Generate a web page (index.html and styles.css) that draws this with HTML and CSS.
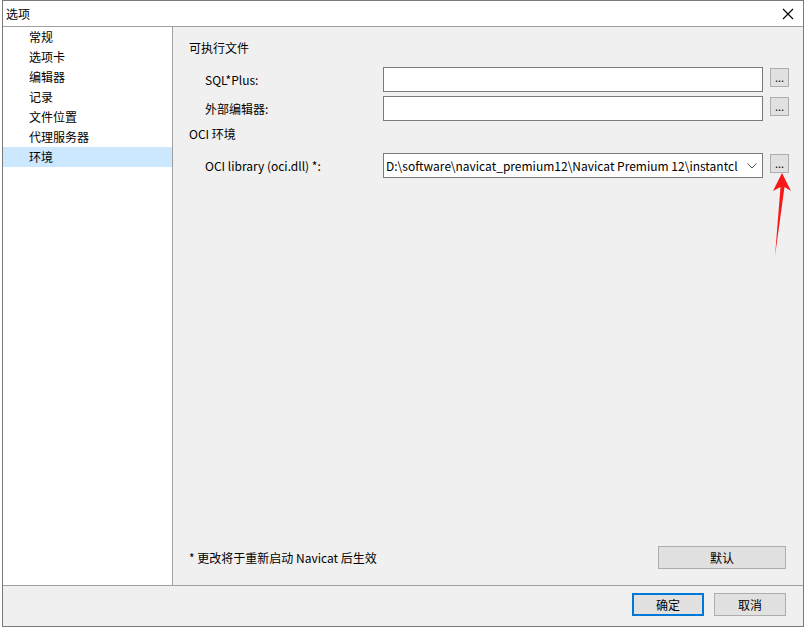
FILE: index.html
```html
<!DOCTYPE html>
<html lang="zh-CN">
<head>
  <meta charset="UTF-8">
  <title>选项</title>
  <link rel="stylesheet" href="styles.css">
</head>
<body>
  <div class="window">
    <div class="titlebar">
      <span class="title">选项</span>
      <svg class="close" width="12" height="12" viewBox="0 0 12 12">
        <path d="M1 1 L11 11 M11 1 L1 11" stroke="#000" stroke-width="1.1" fill="none"/>
      </svg>
    </div>

    <div class="main">
      <ul class="sidebar">
        <li>常规</li>
        <li>选项卡</li>
        <li>编辑器</li>
        <li>记录</li>
        <li>文件位置</li>
        <li>代理服务器</li>
        <li class="active">环境</li>
      </ul>

      <div class="content">
        <div class="group-title first">可执行文件</div>
        <div class="field">
          <label>SQL*Plus:</label>
          <div class="input"></div>
          <button type="button" class="dots">...</button>
        </div>
        <div class="field second">
          <label>外部编辑器:</label>
          <div class="input"></div>
          <button type="button" class="dots">...</button>
        </div>

        <div class="group-title">OCI 环境</div>
        <div class="field oci">
          <label>OCI library (oci.dll) *:</label>
          <div class="input combo">
            <span class="combo-text">D:\software\navicat_premium12\Navicat Premium 12\instantclient_10_2\oci.dll</span>
            <svg class="chevron" width="10" height="6" viewBox="0 0 10 6">
              <path d="M0.5 0.5 L5 5 L9.5 0.5" stroke="#555" stroke-width="1" fill="none"/>
            </svg>
          </div>
          <button type="button" class="dots">...</button>
        </div>

        <div class="bottom">
          <span class="note">* 更改将于重新启动 Navicat 后生效</span>
          <button type="button" class="btn wide">默认</button>
        </div>
      </div>
    </div>

    <div class="footer">
      <button type="button" class="btn ok">确定</button>
      <button type="button" class="btn">取消</button>
    </div>

    <!-- 标注箭头 -->
    <svg class="arrow" width="30" height="90" viewBox="0 0 30 90">
      <polygon points="11,1 20,19 13.5,15 4,84 9.5,15 2,19" fill="#f5191a"/>
    </svg>
  </div>
</body>
</html>
```

FILE: styles.css
```css
*{
  margin: 0; padding: 0;
  box-sizing: border-box;
}

body{
  background: #fff;
  font-family: "Noto Sans CJK SC", "Microsoft YaHei", sans-serif;
  font-size: 12px;
  color: #000;
}

/* 窗口 */
.window{
  position: relative;
  margin-left: 2px;
  width: 802px; height: 627px;
  border: 1px solid #7a7a7a;
  display: flex; flex-direction: column;
}

.titlebar{
  height: 26px;
  background: #fff;
  border-bottom: 1px solid #a0a0a0;
  display: flex; align-items: center;
  justify-content: space-between;
  padding: 0 9px 0 3px;
}
.title{ line-height: 16px; }

/* 中间 */
.main{
  flex: 1;
  display: flex;
  border-bottom: 1px solid #a0a0a0;
}

.sidebar{
  list-style: none;
  width: 170px; flex-shrink: 0;
  background: #fff;
  border-right: 1px solid #a0a0a0;
}
.sidebar li{
  height: 20px; line-height: 20px;
  padding-left: 26px;
}
.sidebar li.active{
  background: #cce8ff;
}

.content{
  flex: 1;
  background: #f0f0f0;
  display: flex; flex-direction: column;
  padding: 0 0 16px 16px;
}

.group-title{
  height: 16px; line-height: 16px;
  margin-top: 5px;
}
.group-title.first{ margin-top: 13px; }

.field{
  display: flex; align-items: flex-start;
  margin-top: 11px;
}
.field.second{ margin-top: 4px; }
.field label{
  width: 194px; flex-shrink: 0;
  padding-left: 16px;
  line-height: 25px;
}

.input{
  width: 380px; height: 25px; flex-shrink: 0;
  background: #fff;
  border: 1px solid #7a7a7a;
}
.combo{
  display: flex; align-items: center;
  padding-left: 2px;
}
.combo-text{
  flex: 1;
  white-space: nowrap; overflow: hidden;
  line-height: 16px;
}
.chevron{
  margin: 0 5px 0 9px;
}

.dots{
  width: 19px; height: 19px; flex-shrink: 0;
  margin: 1px 0 0 7px;
  background: #e1e1e1;
  border: 1px solid #adadad;
  font-family: inherit; font-size: 11px;
  line-height: 17px;
}

.bottom{
  margin-top: auto;
  padding-right: 17px;
  display: flex; align-items: center;
  justify-content: space-between;
}
.note{ line-height: 16px; }

.btn{
  height: 23px; width: 72px;
  background: #e1e1e1;
  border: 1px solid #adadad;
  font-family: inherit; font-size: 12px;
}
.btn.wide{ width: 128px; }
.btn.ok{ border: 2px solid #0078d7; }

/* 下面 */
.footer{
  height: 40px;
  background: #f0f0f0;
  display: flex; justify-content: flex-end; align-items: flex-start;
  gap: 10px;
  padding: 7px 17px 0 0;
}

.arrow{
  position: absolute;
  left: 768px; top: 171px;
}
```
